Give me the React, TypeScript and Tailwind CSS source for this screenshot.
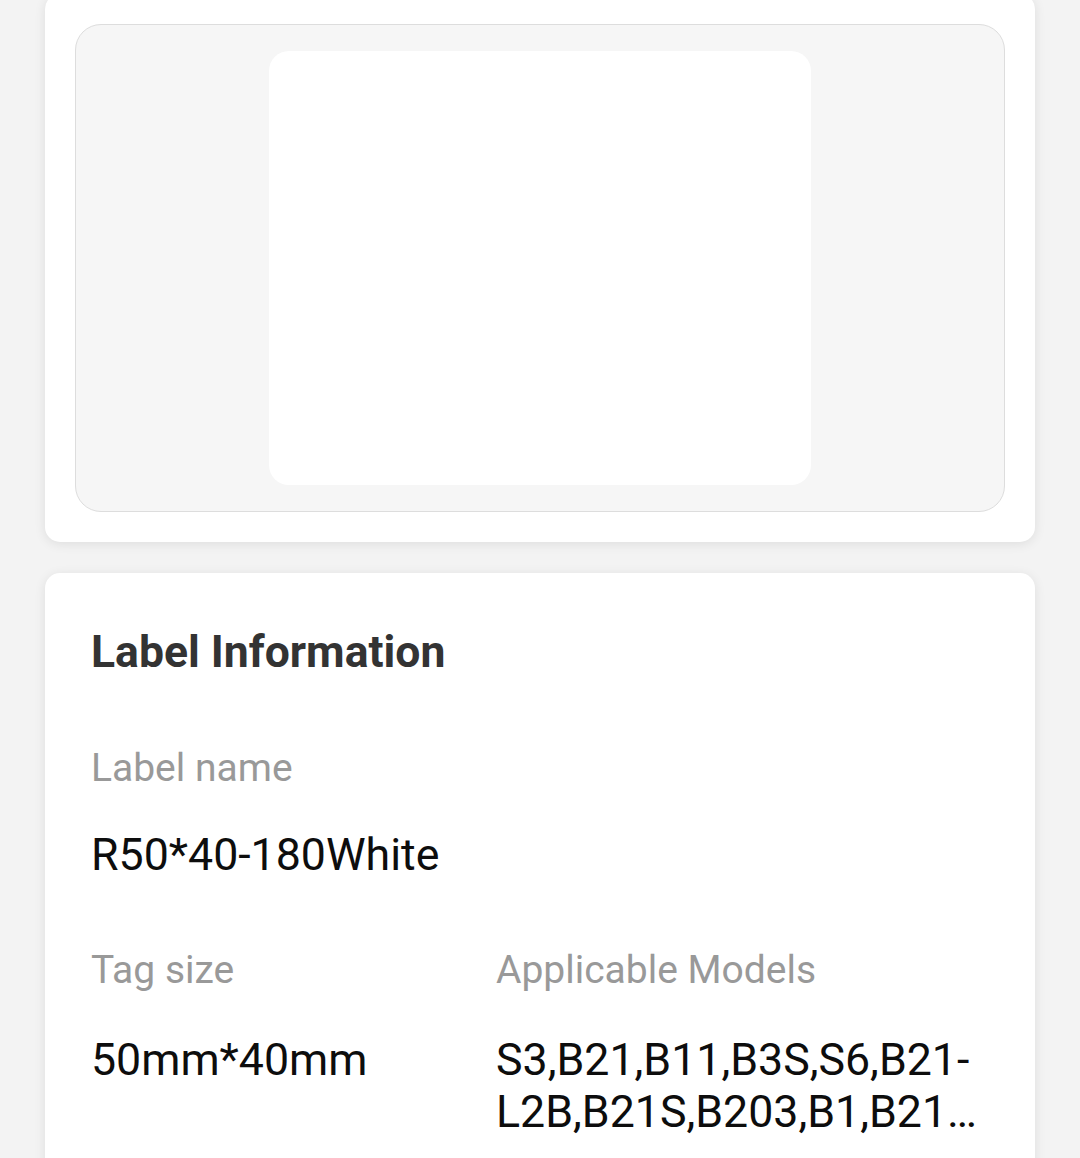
import React from "react"

const font = { fontFamily: "Roboto, 'Noto Sans', sans-serif" }

function Field({ label, value, clamp, gap }: { label: string; value: string; clamp?: boolean; gap: string }) {
  return (
    <div className="min-w-0">
      <p className="text-[39px] leading-[46px] text-[#999999]">{label}</p>
      <p className={`${gap} text-[44.7px] leading-[52px] text-[#0d0d0d] ${clamp ? "line-clamp-2" : ""}`}>{value}</p>
    </div>
  )
}

export default function App() {
  return (
    <div className="min-h-[1158px] bg-[#f3f3f3] overflow-hidden" style={font}>
      <div className="px-[45px]">
        {/* label preview */}
        <div className="-mt-[6px] rounded-[15px] bg-white p-[30px] shadow-[0_2px_12px_rgba(0,0,0,0.09)]">
          <div className="flex h-[488px] items-center justify-center rounded-[26px] border border-[#dddddd] bg-[#f6f6f6]">
            <div className="h-[434px] w-[542px] rounded-[20px] bg-white" />
          </div>
        </div>

        {/* label info */}
        <div className="mt-[31px] rounded-[15px] bg-white pl-[46px] pr-[45px] pt-[53px] pb-[60px] shadow-[0_2px_12px_rgba(0,0,0,0.09)]">
          <h2 className="text-[44.5px] font-bold leading-[52px] text-[#333333]">Label Information</h2>

          <div className="mt-[67px]">
            <Field label="Label name" value="R50*40-180White" gap="mt-[38px]" />
          </div>

          <div className="mt-[66px] grid grid-cols-[405px_1fr]">
            <Field label="Tag size" value="50mm*40mm" gap="mt-[41px]" />
            <Field label="Applicable Models" value="S3,B21,B11,B3S,S6,B21-L2B,B21S,B203,B1,B21…" clamp gap="mt-[41px]" />
          </div>
        </div>
      </div>
    </div>
  )
}
